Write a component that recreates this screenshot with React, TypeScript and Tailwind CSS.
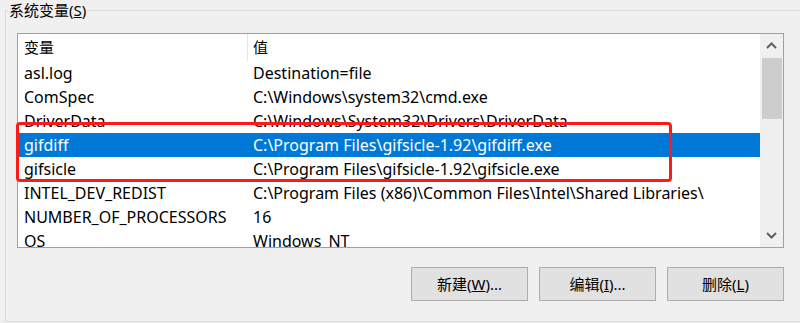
import React from 'react';

type Row = { name: string; value: string; selected?: boolean };

const rows: Row[] = [
  { name: 'asl.log', value: 'Destination=file' },
  { name: 'ComSpec', value: 'C:\\Windows\\system32\\cmd.exe' },
  { name: 'DriverData', value: 'C:\\Windows\\System32\\Drivers\\DriverData' },
  { name: 'gifdiff', value: 'C:\\Program Files\\gifsicle-1.92\\gifdiff.exe', selected: true },
  { name: 'gifsicle', value: 'C:\\Program Files\\gifsicle-1.92\\gifsicle.exe' },
  { name: 'INTEL_DEV_REDIST', value: 'C:\\Program Files (x86)\\Common Files\\Intel\\Shared Libraries\\' },
  { name: 'NUMBER_OF_PROCESSORS', value: '16' },
  { name: 'OS', value: 'Windows_NT' },
];

const font = { fontFamily: '"Noto Sans", "Noto Sans CJK SC", sans-serif' };

const Chevron = ({ up }: { up?: boolean }) => (
  <svg width="11" height="7" viewBox="0 0 11 7">
    <polyline
      points={up ? '1,6 5.5,1.5 10,6' : '1,1 5.5,5.5 10,1'}
      fill="none"
      stroke="#606060"
      strokeWidth="2"
    />
  </svg>
);

const WinButton = ({ children }: { children: React.ReactNode }) => (
  <button className="w-[117px] h-[34px] bg-[#e1e1e1] border border-[#adadad] text-[15px] text-black flex items-center justify-center">
    {children}
  </button>
);

export default function App() {
  return (
    <div className="w-[800px] h-[323px] bg-[#f0f0f0] relative overflow-hidden text-[15px] text-black" style={font}>
      <div className="mt-[10px] ml-[5px] h-[312px] border-l border-t border-b border-[#dcdcdc] relative pl-[11px] pt-[22px]">
        <span className="absolute left-[2px] -top-[11px] leading-[20px] bg-[#f0f0f0] px-[1px]">
          系统变量(<span className="underline">S</span>)
        </span>

        {/* list view */}
        <div className="w-[767px] h-[215px] border border-[#a0a0a0] bg-white flex overflow-hidden">
          <div className="flex-1 overflow-hidden">
            <div className="h-[27px] flex items-center">
              <div className="w-[229px] pl-[6px] leading-[27px]">变量</div>
              <div className="w-px h-[27px] bg-[#e5e5e5]" />
              <div className="pl-[5px] leading-[27px]">值</div>
            </div>
            {rows.map(r => (
              <div
                key={r.name}
                className={`h-[24px] flex items-center whitespace-nowrap text-[16px] ${r.selected ? 'bg-[#0078d7] text-white' : ''}`}
              >
                <div className="w-[230px] pl-[6px] leading-[24px]">{r.name}</div>
                <div className="pl-[5px] leading-[24px]">{r.value}</div>
              </div>
            ))}
          </div>

          {/* scrollbar */}
          <div className="w-[23px] h-full bg-[#f0f0f0] flex flex-col items-center">
            <div className="h-[23px] w-full flex items-center justify-center">
              <Chevron up />
            </div>
            <div className="mt-[1px] w-[20px] h-[61px] bg-[#cdcdcd]" />
            <div className="flex-1" />
            <div className="h-[24px] w-full flex items-center justify-center">
              <Chevron />
            </div>
          </div>
        </div>

        <div className="w-[767px] mt-[19px] flex justify-end gap-[11px]">
          <WinButton>新建(<span className="underline">W</span>)...</WinButton>
          <WinButton>编辑(<span className="underline">I</span>)...</WinButton>
          <WinButton>删除(<span className="underline">L</span>)</WinButton>
        </div>
      </div>

      {/* red annotation box */}
      <div className="absolute left-[16px] top-[122px] w-[656px] h-[60px] border-[3px] border-[#ff1a1a] rounded-[4px]" />
    </div>
  );
}
